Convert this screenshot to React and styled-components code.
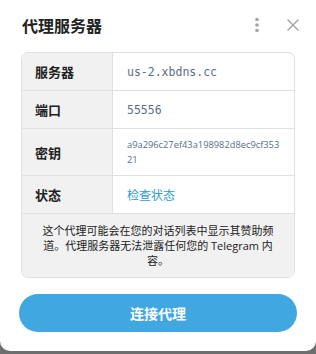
import styled, { createGlobalStyle } from 'styled-components';

const GlobalStyle = createGlobalStyle`
  html, body {
    margin: 0;
    padding: 0;
    background: #6e6e6e;
  }
  body {
    font-family: "Open Sans", "Noto Sans CJK SC", sans-serif;
  }
`;

const rows = [
  { label: '服务器', value: 'us-2.xbdns.cc', kind: 'mono' },
  { label: '端口', value: '55556', kind: 'mono' },
  { label: '密钥', value: 'a9a296c27ef43a198982d8ec9cf35321', kind: 'secret' },
  { label: '状态', value: '检查状态', kind: 'link' },
];

function App() {
  return (
    <>
      <GlobalStyle />
      <Modal>
        <Header>
          <Title>代理服务器</Title>
          <HeaderIcons>
            <IconButton aria-label="more">
              <svg width="6" height="16" viewBox="0 0 6 16">
                <circle cx="3" cy="2.5" r="1.8" fill="#a3a3a3" />
                <circle cx="3" cy="8" r="1.8" fill="#a3a3a3" />
                <circle cx="3" cy="13.5" r="1.8" fill="#a3a3a3" />
              </svg>
            </IconButton>
            <IconButton aria-label="close">
              <svg width="14" height="14" viewBox="0 0 14 14">
                <path d="M1.5 1.5 L12.5 12.5 M12.5 1.5 L1.5 12.5" stroke="#a3a3a3" strokeWidth="1.4" fill="none" />
              </svg>
            </IconButton>
          </HeaderIcons>
        </Header>

        <Table>
          {rows.map(row => (
            <Row key={row.label}>
              <Label>{row.label}</Label>
              <Value kind={row.kind}>{row.value}</Value>
            </Row>
          ))}
          <Notice>
            这个代理可能会在您的对话列表中显示其赞助频道。代理服务器无法泄露任何您的 Telegram 内容。
          </Notice>
        </Table>

        <ConnectButton>连接代理</ConnectButton>
      </Modal>
    </>
  );
}

const Modal = styled.div`
  width: 316px;
  height: 351px;
  background: #ffffff;
  border-radius: 0 0 10px 10px;
  box-sizing: border-box;
  padding: 0 21px 0 21px;
  display: flex;
  flex-direction: column;
`;

const Header = styled.div`
  display: flex;
  align-items: center;
  justify-content: space-between;
  height: 50px;
`;

const Title = styled.div`
  font-size: 16px;
  font-weight: 700;
  color: #222222;
  margin-left: 1px;
`;

const HeaderIcons = styled.div`
  display: flex;
  align-items: center;
  gap: 26px;
  margin-right: -5px;
`;

const IconButton = styled.div`
  display: flex;
  align-items: center;
  justify-content: center;
  cursor: pointer;
`;

const Table = styled.div`
  margin-top: 2px;
  border: 1px solid #e0e0e0;
  border-radius: 7px;
  overflow: hidden;
`;

const Row = styled.div`
  display: grid;
  grid-template-columns: 91px 1fr;
  border-bottom: 1px solid #e0e0e0;
  min-height: 37px;
`;

const Label = styled.div`
  background: #f1f1f1;
  border-right: 1px solid #e0e0e0;
  display: flex;
  align-items: center;
  padding-left: 13px;
  font-size: 13px;
  font-weight: 700;
  color: #222222;
`;

const Value = styled.div`
  display: flex;
  align-items: center;
  padding: ${p => (p.kind === 'secret' ? '8px 12px 8px 14px' : '0 10px 0 14px')};
  word-break: break-all;
  color: ${p => (p.kind === 'link' ? '#2e9ad8' : '#5b6e88')};
  font-family: ${p => (p.kind === 'mono' ? '"DejaVu Sans Mono", monospace' : '"Open Sans", "Noto Sans CJK SC", sans-serif')};
  font-size: ${p => (p.kind === 'mono' ? '11.5px' : p.kind === 'secret' ? '9.3px' : '12px')};
  line-height: ${p => (p.kind === 'secret' ? '15px' : 'normal')};
`;

const Notice = styled.div`
  background: #f1f1f1;
  padding: 9px 14px 9px;
  text-align: center;
  font-size: 11px;
  line-height: 15px;
  color: #222222;
`;

const ConnectButton = styled.button`
  margin: 16px -2px 0;
  height: 38px;
  border: none;
  border-radius: 19px;
  background: #41a7e1;
  color: #ffffff;
  font-family: "Open Sans", "Noto Sans CJK SC", sans-serif;
  font-size: 14px;
  font-weight: 700;
  cursor: pointer;
`;

export default App;
